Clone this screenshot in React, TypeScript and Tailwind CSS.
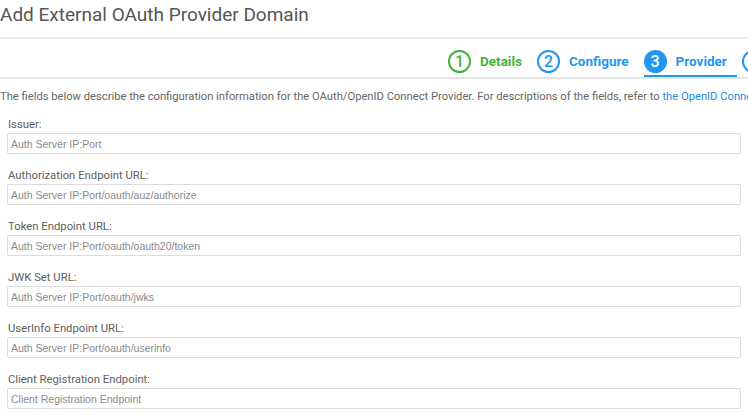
import React from 'react';

const fields = [
  { label: 'Issuer:', placeholder: 'Auth Server IP:Port' },
  { label: 'Authorization Endpoint URL:', placeholder: 'Auth Server IP:Port/oauth/auz/authorize' },
  { label: 'Token Endpoint URL:', placeholder: 'Auth Server IP:Port/oauth/oauth20/token' },
  { label: 'JWK Set URL:', placeholder: 'Auth Server IP:Port/oauth/jwks' },
  { label: 'UserInfo Endpoint URL:', placeholder: 'Auth Server IP:Port/oauth/userinfo' },
  { label: 'Client Registration Endpoint:', placeholder: 'Client Registration Endpoint' },
];

const Step: React.FC<{ n: number; label: string; state: 'done' | 'todo' | 'active' }> = ({ n, label, state }) => {
  const green = state === 'done';
  const active = state === 'active';
  return (
    <div
      className={`flex items-center gap-[9px] pr-[10px] pt-[9px] h-full shrink-0 border-b-2 ${
        active ? 'border-[#2196f3]' : 'border-transparent'
      }`}
    >
      <div
        className={`w-[23px] h-[23px] rounded-full flex items-center justify-center text-[16px] font-medium leading-none ${
          green
            ? 'border-2 border-[#45b33a] text-[#45b33a]'
            : active
            ? 'bg-[#2196f3] text-white font-bold'
            : 'border-2 border-[#2196f3] text-[#2196f3]'
        }`}
      >
        {n}
      </div>
      <span className={`text-[13.5px] font-bold ${green ? 'text-[#45b33a]' : 'text-[#2196f3]'}`}>{label}</span>
    </div>
  );
};

const App: React.FC = () => {
  return (
    <div className="w-[748px] h-[414px] overflow-hidden bg-white font-['Roboto',sans-serif]">
      <div className="h-[39px] border-b-2 border-[#ebebeb]">
        <h1 className="text-[19px] leading-[29px] text-[#555]">Add External OAuth Provider Domain</h1>
      </div>

      <div className="h-[40px] flex gap-[5px] pl-[448px] border-b-2 border-[#e4e4e4] whitespace-nowrap overflow-hidden">
        <Step n={1} label="Details" state="done" />
        <Step n={2} label="Configure" state="todo" />
        <Step n={3} label="Provider" state="active" />
        <Step n={4} label="Review" state="todo" />
      </div>

      <p className="text-[11.2px] text-[#666] whitespace-nowrap mt-[10px] leading-[16px]">
        The fields below describe the configuration information for the OAuth/OpenID Connect Provider. For descriptions of the fields, refer to{' '}
        <a className="text-[#1e88e5]">the OpenID Connect specification</a>.
      </p>

      <div className="px-[7px] pt-[12px] flex flex-col gap-[14px]">
        {fields.map((f) => (
          <div key={f.label}>
            <label className="block text-[11.3px] text-[#606060] leading-[16px] pl-px">{f.label}</label>
            <input
              type="text"
              placeholder={f.placeholder}
              className="block w-[734px] h-[21px] border border-[#dcdcdc] rounded-[2px] px-[3px] text-[10.5px] font-['Liberation_Sans',Arial,sans-serif] placeholder-[#8a8a8a] text-[#555] focus:outline-none"
            />
          </div>
        ))}
      </div>
    </div>
  );
};

export default App;
